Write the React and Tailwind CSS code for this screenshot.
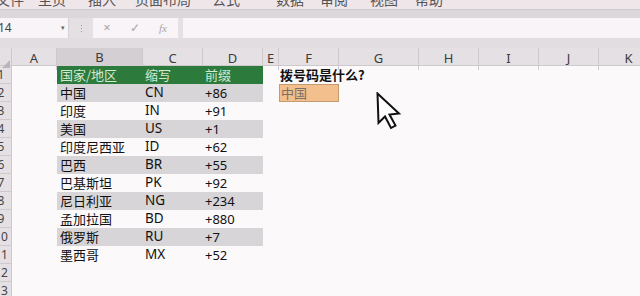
import React from 'react';

const CJK = '"Noto Sans CJK SC", "Noto Sans", sans-serif';
const LATIN = '"Noto Sans", "Noto Sans CJK SC", sans-serif';

const tabs = [
  { label: '文件', x: -4 },
  { label: '主页', x: 38 },
  { label: '插入', x: 88 },
  { label: '页面布局', x: 135 },
  { label: '公式', x: 212 },
  { label: '数据', x: 276 },
  { label: '审阅', x: 320 },
  { label: '视图', x: 370 },
  { label: '帮助', x: 415 },
];

const cols = ['A', 'B', 'C', 'D', 'E', 'F', 'G', 'H', 'I', 'J', 'K'];

const data = [
  ['中国', 'CN', '+86'],
  ['印度', 'IN', '+91'],
  ['美国', 'US', '+1'],
  ['印度尼西亚', 'ID', '+62'],
  ['巴西', 'BR', '+55'],
  ['巴基斯坦', 'PK', '+92'],
  ['尼日利亚', 'NG', '+234'],
  ['孟加拉国', 'BD', '+880'],
  ['俄罗斯', 'RU', '+7'],
  ['墨西哥', 'MX', '+52'],
];

const gridCls = 'grid grid-cols-[12px_45px_86px_60px_60px_16px_60px_80px_60px_60px_60px_60px]';

function RowHead({ n }) {
  return (
    <div className="h-[18px] overflow-hidden bg-[#e4e0e3] border-r border-b border-[#cdc9cc]">
      <div className="w-[20px] ml-[-9px] text-center text-[12px] leading-[18px] text-[#444]" style={{ fontFamily: LATIN }}>
        {n}
      </div>
    </div>
  );
}

export default function App() {
  return (
    <div className="relative w-[640px] h-[296px] overflow-hidden bg-[#fcf9fb] select-none">
      {/* Ribbon tabs, clipped at top */}
      <div className="relative h-[9px] bg-[#efe6ea] overflow-hidden">
        {tabs.map(t => (
          <span key={t.label} className="absolute top-[-9px] text-[14px] leading-[16px] text-[#555]"
            style={{ left: t.x, fontFamily: CJK }}>{t.label}</span>
        ))}
      </div>
      <div className="h-[9px] bg-[#dcd7db] border-t border-[#d0cbcf]" />

      {/* Formula bar */}
      <div className="flex items-stretch h-[20px] bg-[#e4e0e3]">
        <div className="w-[69px] bg-[#f8f4f7] flex items-center justify-between pr-[3px] border-r border-[#d6d1d5] overflow-hidden">
          <span className="text-[12px] text-[#444] ml-[-2px]" style={{ fontFamily: LATIN }}>14</span>
          <span className="text-[7px] text-[#666]">▾</span>
        </div>
        <div className="w-[24px] flex items-center justify-center">
          <div className="flex flex-col gap-[2px]">
            <div className="w-[1px] h-[1px] bg-[#999]" />
            <div className="w-[1px] h-[1px] bg-[#999]" />
            <div className="w-[1px] h-[1px] bg-[#999]" />
          </div>
        </div>
        <div className="w-[85px] bg-[#f8f4f7] flex items-center text-[#a8a4a7]">
          <span className="w-[28px] text-center text-[13px]">×</span>
          <span className="w-[28px] text-center text-[12px]">✓</span>
          <span className="w-[28px] text-center text-[11px] italic" style={{ fontFamily: '"Liberation Serif", serif' }}>fx</span>
        </div>
        <div className="w-[5px]" />
        <div className="flex-1 bg-[#f8f4f7]" />
      </div>
      <div className="h-[10px] bg-[#e1dde0]" />

      {/* Column headers */}
      <div className={`${gridCls} h-[18px] bg-[#e4e0e3] border-b border-[#cdc9cc]`}>
        <div className="relative border-r border-[#cdc9cc]">
          <div className="absolute bottom-[2px] right-[1px] w-0 h-0 border-l-[8px] border-l-transparent border-b-[8px] border-b-[#b9b5b8]" />
        </div>
        {cols.map(c => (
          <div key={c}
            className={`flex items-center justify-center text-[13px] text-[#3c3c3c] border-r border-[#cdc9cc] ${c === 'B' ? 'bg-[#d3cfd2] border-b-2 border-b-[#a9a5a8]' : ''}`}
            style={{ fontFamily: LATIN }}>
            {c}
          </div>
        ))}
      </div>

      {/* Row 1: table header + question */}
      <div className={gridCls}>
        <RowHead n={1} />
        <div />
        <div className="h-[18px] bg-[#2c7a3c] text-[#d2ead3] text-[13px] leading-[18px] pl-[3px]" style={{ fontFamily: CJK }}>国家/地区</div>
        <div className="h-[18px] bg-[#2c7a3c] text-[#d2ead3] text-[13px] leading-[18px] pl-[2px]" style={{ fontFamily: CJK }}>缩写</div>
        <div className="h-[18px] bg-[#2c7a3c] text-[#d2ead3] text-[13px] leading-[18px] pl-[2px]" style={{ fontFamily: CJK }}>前缀</div>
        <div />
        <div className="h-[18px] whitespace-nowrap text-[13px] font-bold leading-[18px] text-[#111] pl-[1px]" style={{ fontFamily: CJK }}>拨号码是什么?</div>
        <div /><div /><div /><div /><div />
      </div>

      {/* Data rows */}
      {data.map((row, i) => {
        const band = i % 2 === 0 ? 'bg-[#d8d5d8]' : '';
        return (
          <div key={row[1]} className={gridCls}>
            <RowHead n={i + 2} />
            <div />
            <div className={`h-[18px] ${band} text-[13px] leading-[18px] text-[#111] pl-[3px]`} style={{ fontFamily: CJK }}>{row[0]}</div>
            <div className={`h-[18px] ${band} text-[13.5px] leading-[16px] text-[#111] pl-[2px]`} style={{ fontFamily: LATIN }}>{row[1]}</div>
            <div className={`h-[18px] ${band} text-[13px] leading-[19px] text-[#111] pl-[2px]`} style={{ fontFamily: LATIN }}>{row[2]}</div>
            <div />
            {i === 0 ? (
              <div className="h-[18px] bg-[#f3bf8c] border border-[#c49a6e] text-[13px] leading-[16px] text-[#7a7065] pl-[1px]" style={{ fontFamily: CJK }}>中国</div>
            ) : <div />}
            <div /><div /><div /><div /><div />
          </div>
        );
      })}

      {[12, 13].map(n => (
        <div key={n} className={gridCls}>
          <RowHead n={n} />
        </div>
      ))}

      {/* Mouse cursor */}
      <svg className="absolute left-[376px] top-[92px]" width="26" height="38" viewBox="0 0 26 38">
        <path d="M1.5 1.5 L2.5 31 L9 24.5 L15 36 L19.5 33.5 L13.5 22.5 L23 21.5 Z"
          fill="#fff" stroke="#111" strokeWidth="2" strokeLinejoin="miter" />
      </svg>
    </div>
  );
}
